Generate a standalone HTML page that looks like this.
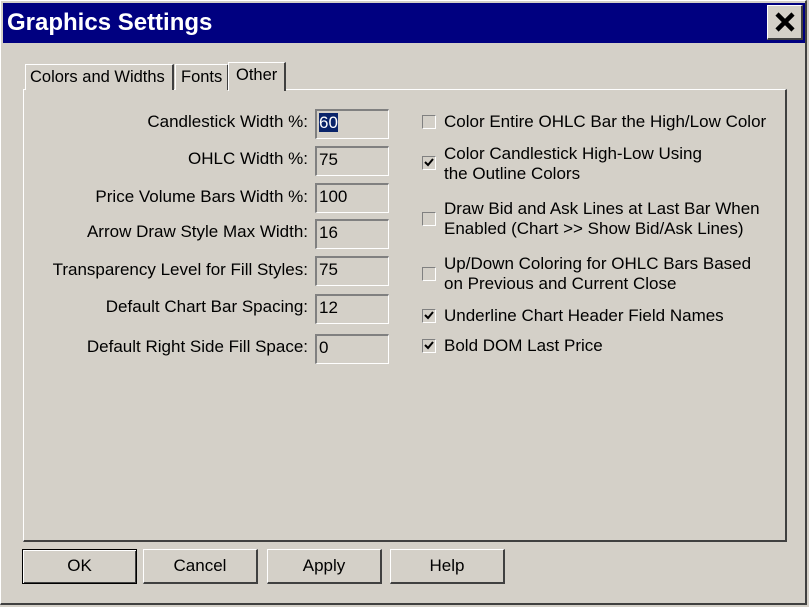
<!DOCTYPE html>
<html><head><style>
body{margin:0;width:809px;height:607px;background:#d4d0c8;font-family:"Liberation Sans",sans-serif;font-size:17px;color:#000;position:relative;overflow:hidden}
.abs{position:absolute}
.win{left:0;top:0;width:807px;height:605px;border-top:1px solid #fff;border-left:1px solid #fff;border-right:2px solid #404040;border-bottom:2px solid #404040;box-sizing:border-box}
.title{left:3px;top:3px;width:802px;height:40px;background:#000080;color:#fff;font-weight:bold;font-size:24px;line-height:40px;padding-left:4px;box-sizing:border-box}
.x{left:767px;top:5px;width:36px;height:35px;background:#d4d0c8;border-top:1px solid #fff;border-left:1px solid #fff;border-right:2px solid #404040;border-bottom:2px solid #404040;box-sizing:border-box}
.panel{left:23px;top:89px;width:764px;height:453px;border-top:1px solid #fff;border-left:1px solid #fff;border-right:2px solid #404040;border-bottom:2px solid #404040;box-sizing:border-box}
.tab{top:64px;height:26px;border-top:1px solid #fff;border-left:1px solid #fff;border-right:2px solid #404040;box-sizing:border-box;line-height:24px;padding-left:5px;background:#d4d0c8;white-space:nowrap;font-size:16.5px}
.lbl{right:501px;text-align:right;white-space:nowrap;line-height:20px}
.inp{left:315px;width:74px;height:30px;border-top:2px solid #808080;border-left:2px solid #808080;border-right:1px solid #fff;border-bottom:1px solid #fff;box-sizing:border-box;padding:1px 0 0 2px;line-height:22px}
.cb{left:422px;width:14px;height:14px;border-top:1px solid #808080;border-left:1px solid #808080;border-right:1px solid #fff;border-bottom:1px solid #fff;box-sizing:border-box}
.ct{left:444px;line-height:20px;white-space:nowrap}
.btn{top:549px;width:115px;height:35px;border-top:1px solid #fff;border-left:1px solid #fff;border-right:2px solid #404040;border-bottom:2px solid #404040;box-sizing:border-box;text-align:center;line-height:32px}
</style></head><body>
<div class="abs win"></div>
<div class="abs title">Graphics Settings</div>
<div class="abs x"><svg width="34" height="33"><path d="M9 8L25 24M25 8L9 24" stroke="#000" stroke-width="4.5"/></svg></div>
<div class="abs panel"></div>
<div class="abs tab" style="left:25px;width:149px;padding-left:4px">Colors and Widths</div>
<div class="abs tab" style="left:175px;width:54px;padding-left:5px">Fonts</div>
<div class="abs tab" style="left:228px;top:62px;width:58px;height:29px;border-bottom:none;line-height:25px;padding-left:7px">Other</div>

<div class="abs lbl" style="top:112px">Candlestick Width %:</div>
<div class="abs lbl" style="top:149px">OHLC Width %:</div>
<div class="abs lbl" style="top:187px">Price Volume Bars Width %:</div>
<div class="abs lbl" style="top:222px">Arrow Draw Style Max Width:</div>
<div class="abs lbl" style="top:260px">Transparency Level for Fill Styles:</div>
<div class="abs lbl" style="top:297px">Default Chart Bar Spacing:</div>
<div class="abs lbl" style="top:337px">Default Right Side Fill Space:</div>

<div class="abs inp" style="top:109px"><span style="background:#0a246a;color:#fff">60</span></div>
<div class="abs inp" style="top:146px">75</div>
<div class="abs inp" style="top:183px">100</div>
<div class="abs inp" style="top:219px">16</div>
<div class="abs inp" style="top:256px">75</div>
<div class="abs inp" style="top:294px">12</div>
<div class="abs inp" style="top:334px">0</div>

<div class="abs cb" style="top:115px"></div><div class="abs ct" style="top:112px">Color Entire OHLC Bar the High/Low Color</div>
<div class="abs cb" style="top:156px"><svg width="12" height="12" style="position:absolute;left:0;top:0"><path d="M2 5L5 8L10 2" stroke="#000" stroke-width="2" fill="none"/></svg></div><div class="abs ct" style="top:144px">Color Candlestick High-Low Using<br>the Outline Colors</div>
<div class="abs cb" style="top:212px"></div><div class="abs ct" style="top:199px">Draw Bid and Ask Lines at Last Bar When<br>Enabled (Chart &gt;&gt; Show Bid/Ask Lines)</div>
<div class="abs cb" style="top:267px"></div><div class="abs ct" style="top:254px">Up/Down Coloring for OHLC Bars Based<br>on Previous and Current Close</div>
<div class="abs cb" style="top:309px"><svg width="12" height="12" style="position:absolute;left:0;top:0"><path d="M2 5L5 8L10 2" stroke="#000" stroke-width="2" fill="none"/></svg></div><div class="abs ct" style="top:306px">Underline Chart Header Field Names</div>
<div class="abs cb" style="top:339px"><svg width="12" height="12" style="position:absolute;left:0;top:0"><path d="M2 5L5 8L10 2" stroke="#000" stroke-width="2" fill="none"/></svg></div><div class="abs ct" style="top:336px">Bold DOM Last Price</div>

<div class="abs btn" style="left:22px;border:1px solid #000;box-shadow:inset 1px 1px #fff,inset -1px -1px #404040">OK</div>
<div class="abs btn" style="left:143px">Cancel</div>
<div class="abs btn" style="left:267px">Apply</div>
<div class="abs btn" style="left:390px">Help</div>
</body></html>
